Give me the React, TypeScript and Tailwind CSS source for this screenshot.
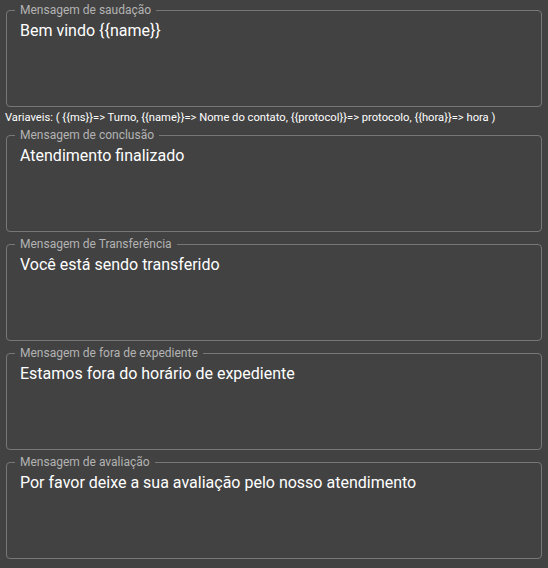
const MESSAGES = [
  { label: "Mensagem de saudação", value: "Bem vindo {{name}}" },
  { label: "Mensagem de conclusão", value: "Atendimento finalizado" },
  { label: "Mensagem de Transferência", value: "Você está sendo transferido" },
  { label: "Mensagem de fora de expediente", value: "Estamos fora do horário de expediente" },
  { label: "Mensagem de avaliação", value: "Por favor deixe a sua avaliação pelo nosso atendimento" },
];

function MessageField({ label, value }: { label: string; value: string }) {
  return (
    <fieldset className="h-[104px] rounded-[4px] border border-[#777777] pb-2">
      <legend className="ml-[8px] px-[5px] text-[12px] leading-[14px] text-[#b3b3b3]">{label}</legend>
      <div className="mt-[2px] px-[13px] text-[16px] leading-[23px] text-white">{value}</div>
    </fieldset>
  );
}

export default function App() {
  return (
    <div
      className="min-h-[568px] bg-[#424242] px-[6px] pt-[3px]"
      style={{ fontFamily: "Roboto, 'Liberation Sans', sans-serif" }}
    >
      <MessageField {...MESSAGES[0]} />
      <p className="mt-[3px] mb-[2px] -ml-[1px] text-[11.2px] leading-[16px] text-white">
        Variaveis: ( {"{{ms}}"}=&gt; Turno, {"{{name}}"}=&gt; Nome do contato, {"{{protocol}}"}=&gt; protocolo,{" "}
        {"{{hora}}"}=&gt; hora )
      </p>
      <div className="flex flex-col gap-[5px]">
        {MESSAGES.slice(1).map((m, i) => (
          <MessageField key={i} {...m} />
        ))}
      </div>
    </div>
  );
}
